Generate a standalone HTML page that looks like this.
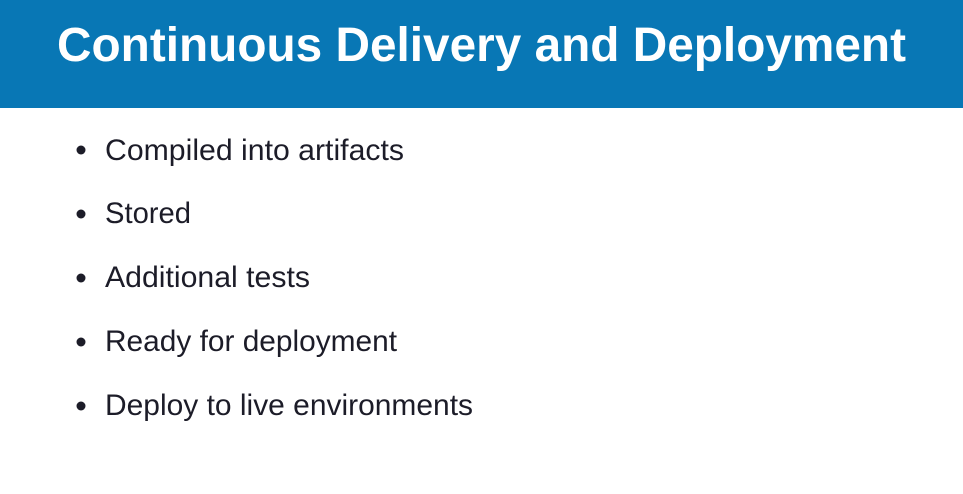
<!DOCTYPE html>
<html><head><meta charset="utf-8"><style>
html,body{margin:0;padding:0;background:#fff;width:963px;height:494px;overflow:hidden}
</style></head><body>
<svg width="963" height="494" xmlns="http://www.w3.org/2000/svg" style="display:block">
<rect x="0" y="0" width="963" height="108" fill="#0877b5"/>
<text x="57" y="61" textLength="849" lengthAdjust="spacingAndGlyphs" font-family="Liberation Sans, sans-serif" font-weight="bold" font-size="48" fill="#fff">Continuous Delivery and Deployment</text>
<g font-family="Liberation Sans, sans-serif" font-size="30" fill="#1c1c28">
<circle cx="81" cy="150" r="4.5" fill="#1c1c28"/>
<text x="105" y="160" textLength="299" lengthAdjust="spacingAndGlyphs">Compiled into artifacts</text>
<circle cx="81" cy="214" r="4.5" fill="#1c1c28"/>
<text x="105" y="223" textLength="86" lengthAdjust="spacingAndGlyphs">Stored</text>
<circle cx="81" cy="278" r="4.5" fill="#1c1c28"/>
<text x="105" y="287" textLength="205" lengthAdjust="spacingAndGlyphs">Additional tests</text>
<circle cx="81" cy="342" r="4.5" fill="#1c1c28"/>
<text x="105" y="351" textLength="292" lengthAdjust="spacingAndGlyphs">Ready for deployment</text>
<circle cx="81" cy="406" r="4.5" fill="#1c1c28"/>
<text x="105" y="415" textLength="368" lengthAdjust="spacingAndGlyphs">Deploy to live environments</text>
</g>
</svg>
</body></html>
